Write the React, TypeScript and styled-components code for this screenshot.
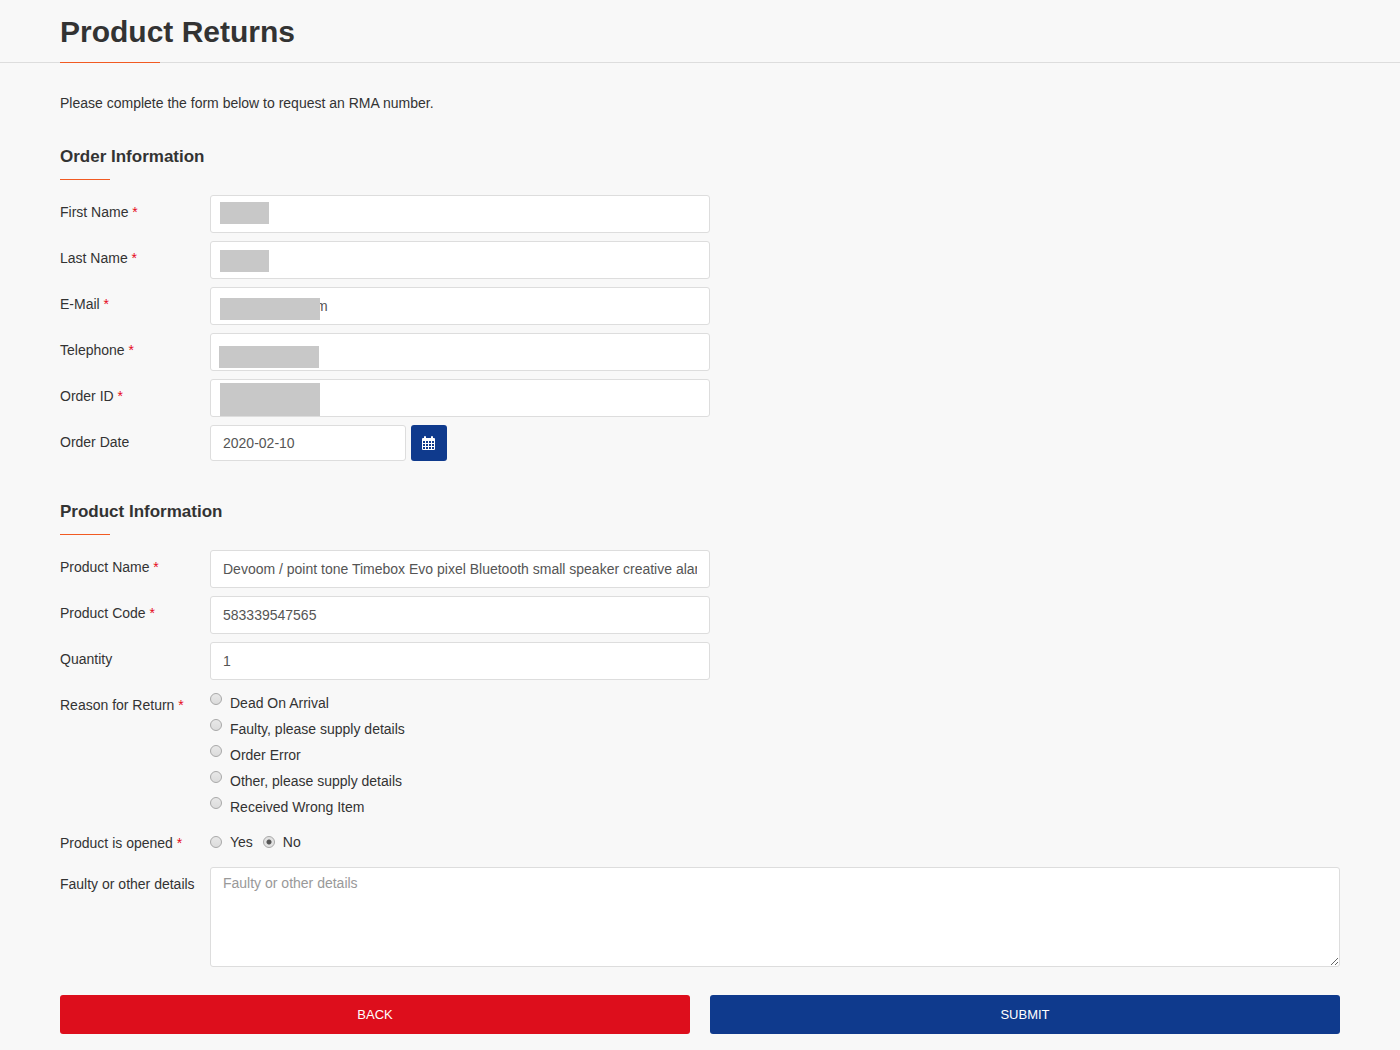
import React from "react";
import styled, { createGlobalStyle } from "styled-components";

const GlobalStyle = createGlobalStyle`
  *, *::before, *::after {
    box-sizing: border-box;
  }
  body {
    margin: 0;
    background: #f8f8f8;
    color: #333;
    font-family: "Liberation Sans", Arial, sans-serif;
    font-size: 14px;
    line-height: 20px;
  }
  input, textarea, button {
    font: inherit;
  }
`;

const Header = styled.header`
  padding: 12px 60px 10px;
  border-bottom: 1px solid #ddd;
  position: relative;
`;

const Title = styled.h1`
  margin: 0;
  font-size: 30px;
  line-height: 40px;
  font-weight: 700;

  &::after {
    content: "";
    position: absolute;
    left: 60px;
    bottom: -1px;
    width: 100px;
    height: 1px;
    background: #f15a22;
  }
`;

const Main = styled.main`
  padding: 30px 60px 16px;
`;

const Intro = styled.p`
  margin: 0 0 34px;
`;

const Section = styled.section`
  margin-bottom: 41px;

  &:last-of-type {
    margin-bottom: 28px;
  }
`;

const SectionTitle = styled.h2`
  margin: 0 0 15px;
  font-size: 17px;
  line-height: 20px;
  font-weight: 700;

  &::after {
    content: "";
    display: block;
    width: 50px;
    height: 1px;
    margin-top: 12px;
    background: #f15a22;
  }
`;

const Rows = styled.div`
  display: flex;
  flex-direction: column;
  gap: 8px;
`;

const Row = styled.div`
  display: grid;
  grid-template-columns: 150px minmax(0, 1fr);
  align-items: start;
`;

const labelText = `
  padding-top: 7px;
`;

const FieldLabel = styled.label`
  ${labelText}
`;

const GroupLabel = styled.span`
  ${labelText}
`;

const Star = styled.span`
  color: #e60a20;
`;

const Control = styled.div`
  position: relative;
  max-width: 500px;
`;

const TextInput = styled.input<{ $indent?: number }>`
  display: block;
  width: 100%;
  height: 38px;
  padding: 0 12px;
  padding-left: ${(p) => p.$indent ?? 12}px;
  border: 1px solid #ddd;
  border-radius: 3px;
  background: #fff;
  color: #555;
`;

const Redaction = styled.span<{ $x: number; $y: number; $w: number; $h: number }>`
  position: absolute;
  left: ${(p) => p.$x}px;
  top: ${(p) => p.$y}px;
  width: ${(p) => p.$w}px;
  height: ${(p) => p.$h}px;
  background: #c8c8c8;
`;

const DateGroup = styled.div`
  display: flex;
  gap: 5px;
`;

const DateInput = styled(TextInput)`
  width: 196px;
  height: 36px;
`;

const CalendarButton = styled.button`
  display: flex;
  align-items: center;
  justify-content: center;
  width: 36px;
  height: 36px;
  padding: 0;
  border: 0;
  border-radius: 3px;
  background: #0f3a8d;
  color: #fff;
  cursor: pointer;
`;

const ReasonList = styled.div`
  display: flex;
  flex-direction: column;
  gap: 6px;
  padding: 5px 0 1px;
`;

const OpenedList = styled.div`
  display: flex;
  gap: 10px;
  padding: 6px 0 7px;
`;

const Choice = styled.label<{ $raised?: boolean }>`
  display: flex;
  align-items: ${(p) => (p.$raised ? "flex-start" : "center")};
  gap: 8px;
`;

const Radio = styled.input`
  appearance: none;
  flex: none;
  width: 12px;
  height: 12px;
  margin: 0;
  border: 1px solid #a8a8a8;
  border-radius: 50%;
  background: linear-gradient(#e8e8e8, #dcdcdc);

  &:checked {
    background: radial-gradient(circle, #555 0 2px, #e2e2e2 3px);
  }
`;

const Details = styled.textarea`
  display: block;
  width: 100%;
  height: 100px;
  padding: 5px 12px;
  border: 1px solid #ddd;
  border-radius: 3px;
  background: #fff;
  color: #555;
  resize: vertical;

  &::placeholder {
    color: #999;
  }
`;

const Actions = styled.div`
  display: grid;
  grid-template-columns: 1fr 1fr;
  gap: 20px;
`;

const ActionButton = styled.button<{ $tone: string }>`
  height: 39px;
  border: 0;
  border-radius: 3px;
  background: ${(p) => p.$tone};
  color: #fff;
  font-size: 13px;
  text-transform: uppercase;
  cursor: pointer;
`;

type Mask = { x: number; y: number; w: number; h: number };
type Field = {
  id: string;
  label: string;
  required?: boolean;
  value?: string;
  type?: string;
  indent?: number;
  mask?: Mask;
};

const orderFields: Field[] = [
  { id: "firstname", label: "First Name", required: true, mask: { x: 10, y: 7, w: 49, h: 22 } },
  { id: "lastname", label: "Last Name", required: true, mask: { x: 10, y: 9, w: 49, h: 22 } },
  { id: "email", label: "E-Mail", required: true, value: "m", indent: 105, mask: { x: 10, y: 11, w: 100, h: 22 } },
  { id: "telephone", label: "Telephone", required: true, type: "tel", mask: { x: 9, y: 13, w: 100, h: 22 } },
  { id: "order-id", label: "Order ID", required: true, mask: { x: 10, y: 4, w: 100, h: 33 } },
];

const productFields: Field[] = [
  {
    id: "product",
    label: "Product Name",
    required: true,
    value: "Devoom / point tone Timebox Evo pixel Bluetooth small speaker creative alarm clock",
  },
  { id: "model", label: "Product Code", required: true, value: "583339547565" },
  { id: "quantity", label: "Quantity", value: "1" },
];

const reasons = [
  "Dead On Arrival",
  "Faulty, please supply details",
  "Order Error",
  "Other, please supply details",
  "Received Wrong Item",
];

const Required = () => <Star> *</Star>;

const TextField = ({ id, label, required, value, type = "text", indent, mask }: Field) => (
  <Row>
    <FieldLabel htmlFor={id}>
      {label}
      {required && <Required />}
    </FieldLabel>
    <Control>
      <TextInput id={id} name={id} type={type} defaultValue={value} $indent={indent} />
      {mask && <Redaction $x={mask.x} $y={mask.y} $w={mask.w} $h={mask.h} />}
    </Control>
  </Row>
);

const calendarCells = [5, 8, 11]
  .flatMap((y) => [1, 4, 7, 10].map((x) => `M${x} ${y}h2v2h-2z`))
  .join("");

const CalendarIcon = () => (
  <svg width="14" height="14" viewBox="0 0 14 14" fill="currentColor" aria-hidden="true">
    <path
      fillRule="evenodd"
      d={`M1 2h1V1q0-1 1-1t1 1v1h5V1q0-1 1-1t1 1v1h1q1 0 1 1v10q0 1-1 1H1q-1 0-1-1V3q0-1 1-1z${calendarCells}`}
    />
  </svg>
);

export default function App() {
  return (
    <>
      <GlobalStyle />
      <Header>
        <Title>Product Returns</Title>
      </Header>
      <Main>
        <Intro>Please complete the form below to request an RMA number.</Intro>
        <form onSubmit={(e) => e.preventDefault()}>
          <Section>
            <SectionTitle>Order Information</SectionTitle>
            <Rows>
              {orderFields.map((f) => (
                <TextField key={f.id} {...f} />
              ))}
              <Row>
                <FieldLabel htmlFor="date-ordered">Order Date</FieldLabel>
                <DateGroup>
                  <DateInput id="date-ordered" name="date_ordered" type="text" defaultValue="2020-02-10" />
                  <CalendarButton type="button" aria-label="Choose date">
                    <CalendarIcon />
                  </CalendarButton>
                </DateGroup>
              </Row>
            </Rows>
          </Section>
          <Section>
            <SectionTitle>Product Information</SectionTitle>
            <Rows>
              {productFields.map((f) => (
                <TextField key={f.id} {...f} />
              ))}
              <Row role="radiogroup" aria-labelledby="reason-label">
                <GroupLabel id="reason-label">
                  Reason for Return
                  <Required />
                </GroupLabel>
                <ReasonList>
                  {reasons.map((reason) => (
                    <Choice key={reason} $raised>
                      <Radio type="radio" name="reason" value={reason} />
                      {reason}
                    </Choice>
                  ))}
                </ReasonList>
              </Row>
              <Row role="radiogroup" aria-labelledby="opened-label">
                <GroupLabel id="opened-label">
                  Product is opened
                  <Required />
                </GroupLabel>
                <OpenedList>
                  <Choice>
                    <Radio type="radio" name="opened" value="yes" />
                    Yes
                  </Choice>
                  <Choice>
                    <Radio type="radio" name="opened" value="no" defaultChecked />
                    No
                  </Choice>
                </OpenedList>
              </Row>
              <Row>
                <FieldLabel htmlFor="comment">Faulty or other details</FieldLabel>
                <Details id="comment" name="comment" placeholder="Faulty or other details" />
              </Row>
            </Rows>
          </Section>
          <Actions>
            <ActionButton type="button" $tone="#dd0e1c">
              Back
            </ActionButton>
            <ActionButton type="submit" $tone="#0f3a8d">
              Submit
            </ActionButton>
          </Actions>
        </form>
      </Main>
    </>
  );
}
